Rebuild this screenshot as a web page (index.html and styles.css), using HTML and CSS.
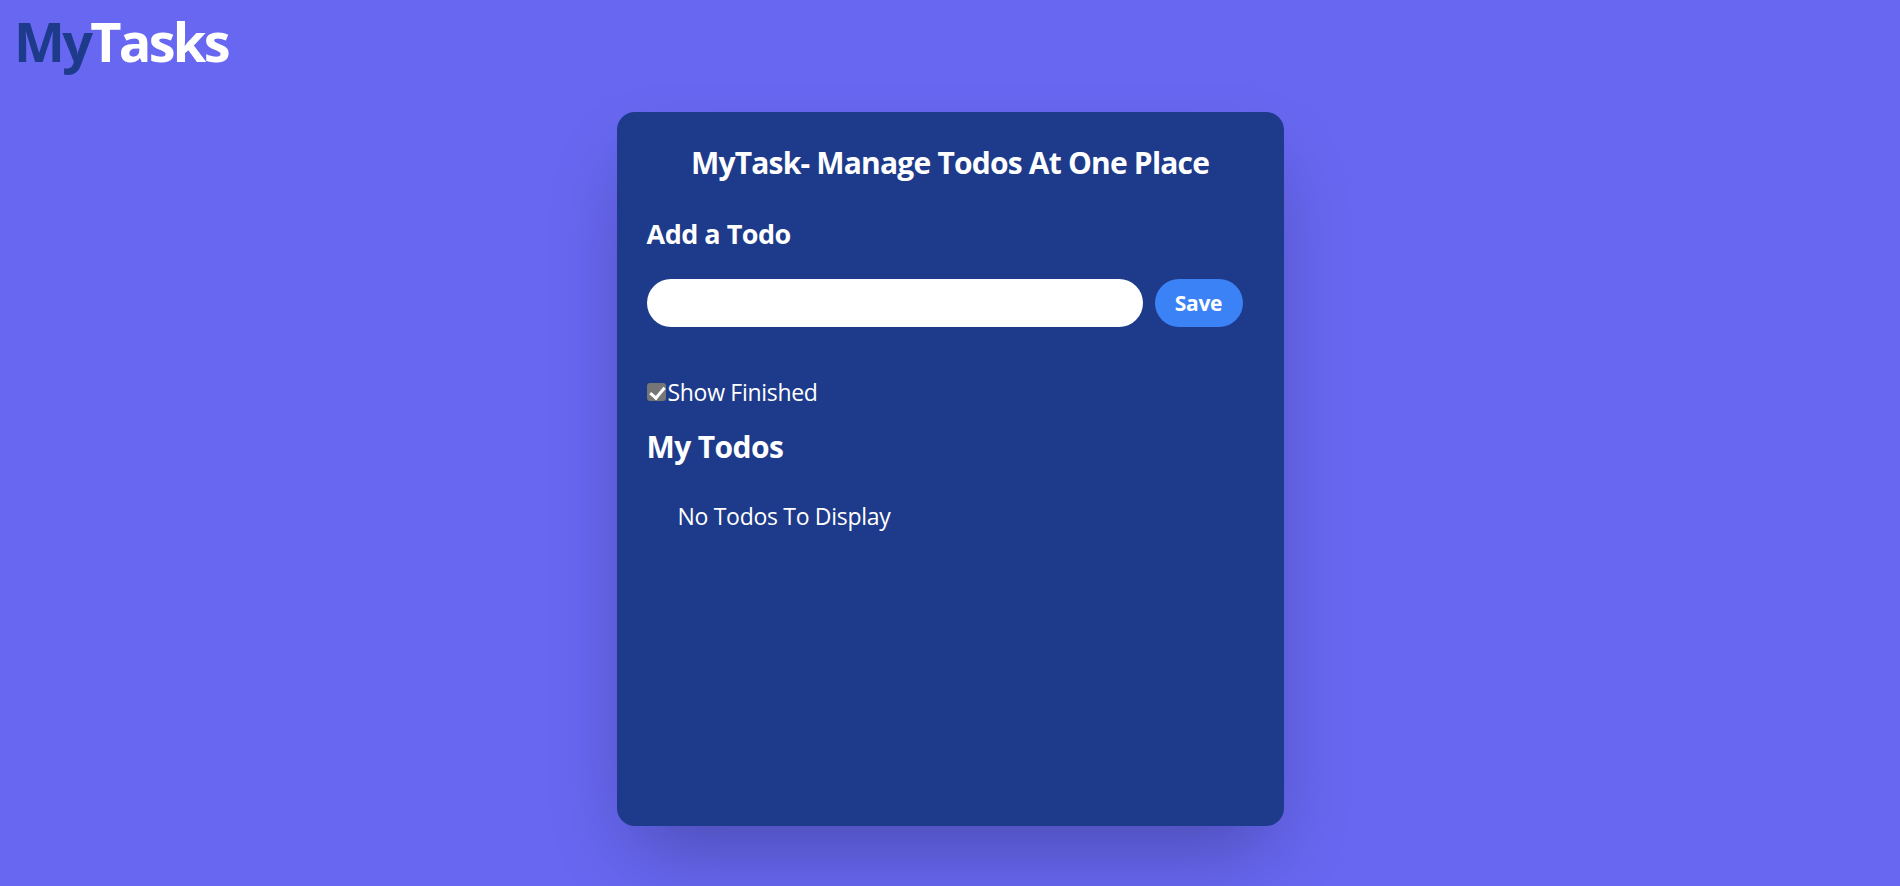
FILE: index.html
```html
<!DOCTYPE html>
<html lang="en">
<head>
<meta charset="utf-8">
<title>MyTasks</title>
<link rel="stylesheet" href="styles.css">
</head>
<body>
  <nav class="navbar">
    <h1 class="brand"><span class="brand-my">My</span><span class="brand-tasks">Tasks</span></h1>
  </nav>
  <main class="card">
    <h2 class="card-title">MyTask- Manage Todos At One Place</h2>
    <section class="add">
      <h3 class="section-title">Add a Todo</h3>
      <div class="add-row">
        <input class="todo-input" type="text" aria-label="Todo">
        <button class="save-btn" type="button">Save</button>
      </div>
    </section>
    <label class="show-finished">
      <input class="check" type="checkbox" checked>
      <span>Show Finished</span>
    </label>
    <h3 class="todos-title">My Todos</h3>
    <div class="todos">
      <div class="empty">No Todos To Display</div>
    </div>
  </main>
</body>
</html>
```
FILE: styles.css
```css
* { box-sizing: border-box; }

html, body {
  margin: 0;
  padding: 0;
}

body {
  background: #6767f1;
  font-family: "Open Sans", "Noto Sans", sans-serif;
  color: #ffffff;
  min-height: 886px;
}

.navbar {
  padding: 14px 0 0 14px;
  height: 68px;
}

.brand {
  margin: 0;
  font-size: 54px;
  line-height: 54px;
  font-weight: 700;
  letter-spacing: -2.7px;
}

.brand-my { color: #1e3a8a; }
.brand-tasks { color: #ffffff; }

.card {
  width: 667px;
  height: 714px;
  margin: 44px auto 0;
  background: #1e3a8a;
  border-radius: 18px;
  padding: 30px 30px 28px;
  box-shadow: 0 37px 75px -18px rgba(0, 0, 0, 0.28);
}

.card-title {
  margin: 0;
  text-align: center;
  font-size: 30px;
  line-height: 42px;
  font-weight: 700;
  letter-spacing: -0.8px;
}

.section-title {
  margin: 30px 0 0;
  font-size: 27px;
  line-height: 40px;
  font-weight: 700;
  letter-spacing: -0.5px;
}

.add-row {
  display: flex;
  gap: 12px;
  margin-top: 25px;
}

.todo-input {
  width: 496px;
  height: 48px;
  border: none;
  outline: none;
  border-radius: 24px;
  background: #ffffff;
  padding: 0 20px;
  font: inherit;
  font-size: 22px;
}

.save-btn {
  width: 88px;
  height: 48px;
  border: none;
  border-radius: 24px;
  background: #3b82f6;
  color: #ffffff;
  font-family: inherit;
  font-size: 21px;
  font-weight: 700;
  letter-spacing: -0.3px;
  padding: 0;
  cursor: pointer;
}

.show-finished {
  display: flex;
  align-items: center;
  margin-top: 47px;
  height: 36px;
  font-size: 23px;
  line-height: 36px;
  letter-spacing: -0.3px;
}

.check {
  appearance: none;
  -webkit-appearance: none;
  width: 19px;
  height: 18px;
  margin: 0 2px 0 0;
  border-radius: 3px;
  background: #767676;
  position: relative;
  flex: none;
}

.check::after {
  content: "";
  position: absolute;
  left: 6px;
  top: 1px;
  width: 6px;
  height: 12px;
  border: solid #ffffff;
  border-width: 0 3px 3px 0;
  transform: rotate(40deg);
}

.todos-title {
  margin: 16px 0 0;
  font-size: 30px;
  line-height: 42px;
  font-weight: 700;
  letter-spacing: -0.6px;
}

.todos {
  margin-top: 30px;
}

.empty {
  margin-left: 31px;
  font-size: 23px;
  line-height: 36px;
  letter-spacing: -0.3px;
}
```
